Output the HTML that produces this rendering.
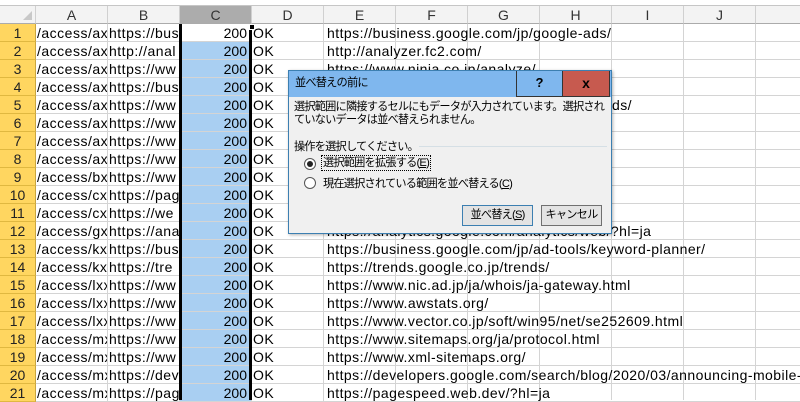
<!DOCTYPE html>
<html><head><meta charset="utf-8"><style>
*{margin:0;padding:0;box-sizing:border-box}
body{width:800px;height:400px;overflow:hidden;background:#fff;font-family:"Liberation Sans","Noto Sans CJK JP",sans-serif;position:relative;font-size:14px}
.top{position:absolute;left:0;top:0;width:800px;height:6px;background:#fff;border-bottom:1px solid #c6c6c6}
.hdr{position:absolute;top:6px;height:18px;background:#f3f3f3;border-right:1px solid #d0d0d0;border-bottom:1px solid #ababab;text-align:center;font-size:14px;line-height:18px;color:#333}
.rh{position:absolute;left:0;width:36px;height:18px;background:#ffd660;border-bottom:1px solid #e0b840;border-right:1px solid #c9a540;text-align:center;font-size:14px;line-height:18px;color:#222}
.c{position:absolute;height:18px;border-right:1px solid #d4d4d4;border-bottom:1px solid #d4d4d4;white-space:nowrap;overflow:hidden;line-height:18px;padding-left:1px;font-size:14px;color:#000;letter-spacing:0.5px}
.e{position:absolute;height:18px;border-bottom:1px solid #d4d4d4;white-space:nowrap;line-height:18px;padding-left:3px;font-size:14px;letter-spacing:0.45px}
.vl{position:absolute;top:24px;height:376px;width:1px;background:#d4d4d4}
.dlg{position:absolute;left:288px;top:70px;width:324px;height:164px;background:#f0f0f0;border:1px solid #3c7fb1;box-shadow:1px 1px 3px rgba(0,0,0,.3);font-size:11.2px;letter-spacing:-0.8px;color:#000;white-space:nowrap}
.tb{height:26px;background:#7fb7ee;position:relative;line-height:24px;padding-left:6px}
.q{position:absolute;left:227px;top:0;width:47px;height:26px;border:1px solid #333;border-top:none;text-align:center;font-weight:bold;line-height:24px;font-size:13px;letter-spacing:0}
.x{position:absolute;left:274px;top:0;width:47px;height:26px;background:#c75a4f;border:1px solid #333;border-left:none;border-top:none;text-align:center;font-weight:bold;line-height:24px;font-size:14px;letter-spacing:0}
.btn{position:absolute;top:134px;height:21px;border:1px solid #707070;background:#e3e3e3;text-align:center;line-height:19px}
.rad{position:absolute;left:15px;width:12px;height:12px;border:1px solid #555;border-radius:50%;background:#fff}
</style></head><body>
<div class="top"></div>
<div class="hdr" style="left:0;width:36px;background:#f3f3f3"><div style="position:absolute;right:3px;bottom:3px;width:0;height:0;border-left:9px solid transparent;border-bottom:9px solid #c8c8c8"></div></div>
<div class="hdr" style="left:36px;width:72px">A</div>
<div class="hdr" style="left:108px;width:72px">B</div>
<div class="hdr" style="left:180px;width:72px;background:#acacac">C</div>
<div class="hdr" style="left:252px;width:72px">D</div>
<div class="hdr" style="left:324px;width:72px">E</div>
<div class="hdr" style="left:396px;width:72px">F</div>
<div class="hdr" style="left:468px;width:72px">G</div>
<div class="hdr" style="left:540px;width:72px">H</div>
<div class="hdr" style="left:612px;width:72px">I</div>
<div class="hdr" style="left:684px;width:72px">J</div>
<div class="hdr" style="left:756px;width:60px"></div>
<div class="vl" style="left:395px"></div><div class="vl" style="left:467px"></div><div class="vl" style="left:539px"></div><div class="vl" style="left:611px"></div><div class="vl" style="left:683px"></div><div class="vl" style="left:755px"></div>
<div id="rows"></div>
<script>
var A=["a","a","a","a","a","a","a","a","b","c","c","g","k","k","l","l","l","m","m","m","m"];
var B=["bus","anal","ww","bus","ww","ww","ww","ww","ww","pag","we","ana","bus","tre","ww","ww","ww","ww","ww","dev","pag"];
var E=["https://business.google.com/jp/google-ads/","http://analyzer.fc2.com/","https://www.ninja.co.jp/analyze/","","","","","","","","","https://analytics.google.com/analytics/web/?hl=ja","https://business.google.com/jp/ad-tools/keyword-planner/","https://trends.google.co.jp/trends/","https://www.nic.ad.jp/ja/whois/ja-gateway.html","https://www.awstats.org/","https://www.vector.co.jp/soft/win95/net/se252609.html","https://www.sitemaps.org/ja/protocol.html","https://www.xml-sitemaps.org/","https://developers.google.com/search/blog/2020/03/announcing-mobile-first","https://pagespeed.web.dev/?hl=ja"];
var h="";
for(var i=0;i<21;i++){var y=24+i*18;
h+='<div class="rh" style="top:'+y+'px">'+(i+1)+'</div>';
h+='<div class="c" style="left:36px;top:'+y+'px;width:72px">/access/'+A[i]+'xx</div>';
h+='<div class="c" style="left:108px;top:'+y+'px;width:72px">'+(i==1?'http://':'https://')+B[i]+'</div>';
h+='<div class="c" style="left:180px;top:'+y+'px;width:72px;text-align:right;padding-right:4px;letter-spacing:0;background:'+(i==0?'#fff':'#a9cff2')+'">200</div>';
h+='<div class="c" style="left:252px;top:'+y+'px;width:72px">OK</div>';
h+='<div class="e" style="left:324px;top:'+y+'px;width:476px">'+E[i]+(i==4?'<span style="position:absolute;left:288px">ds/</span>':'')+'</div>';}
document.getElementById("rows").innerHTML=h;
</script>
<div style="position:absolute;left:179px;top:24px;width:3px;height:376px;background:#000"></div>
<div style="position:absolute;left:249px;top:24px;width:3px;height:376px;background:#000"></div>
<div style="position:absolute;left:249px;top:24px;width:6px;height:6px;background:#000;border:1px solid #fff"></div>
<div class="dlg">
<div class="tb">並べ替えの前に<div class="q">?</div><div class="x">x</div></div>
<div style="position:absolute;left:5px;top:30px;line-height:13px">選択範囲に隣接するセルにもデータが入力されています。選択され<br>ていないデータは並べ替えられません。</div>
<div style="position:absolute;left:5px;top:67px">操作を選択してください。</div>
<div style="position:absolute;left:130px;top:75px;width:188px;height:1px;background:#d5dfe5"></div>
<div class="rad" style="top:87px"><div style="width:6px;height:6px;border-radius:50%;background:#222;margin:2px"></div></div>
<div style="position:absolute;left:32px;top:84px;border:1px dotted #000;padding:0 1px;line-height:14px">選択範囲を拡張する(<u>E</u>)</div>
<div class="rad" style="top:106px"></div>
<div style="position:absolute;left:34px;top:104px">現在選択されている範囲を並べ替える(<u>C</u>)</div>
<div class="btn" style="left:173px;width:71px;border-color:#3c7fb1">並べ替え(<u>S</u>)</div>
<div class="btn" style="left:252px;width:61px">キャンセル</div>
</div>
</body></html>
